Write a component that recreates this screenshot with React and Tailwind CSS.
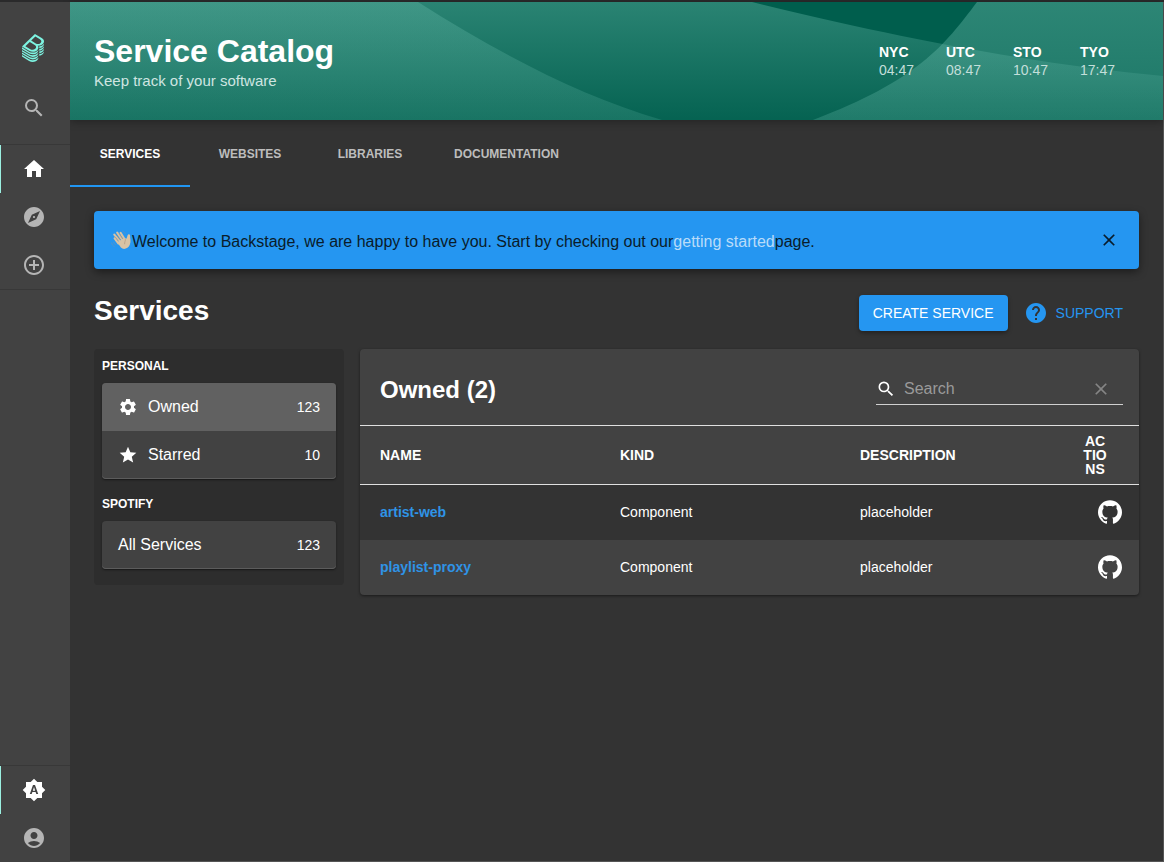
import {
  MdSearch, MdHome, MdExplore, MdControlPoint, MdBrightnessAuto,
  MdAccountCircle, MdHelp, MdClear, MdSettings, MdStar,
} from "react-icons/md";
import { SiGithub } from "react-icons/si";

const LOGO_PATH =
  "M303,166.05a80.69,80.69,0,0,0,13.45-10.37c.79-.77,1.55-1.53,2.3-2.3a83.12,83.12,0,0,0,7.93-9.38A63.69,63.69,0,0,0,333,133.23a48.58,48.58,0,0,0,4.35-16.4c1.49-19.39-10-38.67-35.62-54.22L198.56,0,78.3,115.23,0,190.25l108.6,65.91a111.59,111.59,0,0,0,57.76,16.41c24.92,0,48.8-8.8,66.42-25.69,19.16-18.36,25.52-42.12,13.7-61.87a49.22,49.22,0,0,0-6.8-8.87A89.17,89.17,0,0,0,259,178.29h.15a85.08,85.08,0,0,0,31-5.79A80.88,80.88,0,0,0,303,166.05ZM202.45,225.86c-19.32,18.51-50.4,21.23-75.7,5.9L51.61,186.15l67.45-64.64,76.41,46.38C223,184.58,221.49,207.61,202.45,225.86Zm8.93-82.22-70.65-42.89L205.14,39,274.51,81.1c25.94,15.72,29.31,37,10.55,55A60.69,60.69,0,0,1,211.38,143.64Zm29.86,190c-19.57,18.75-46.17,29.09-74.88,29.09a123.73,123.73,0,0,1-64.1-18.2L0,282.52v24.67L108.6,373.1a111.6,111.6,0,0,0,57.76,16.42c24.92,0,48.8-8.81,66.42-25.69,12.88-12.34,20-27.13,19.68-41.49v-1.79A87.27,87.27,0,0,1,241.24,333.68Zm0-39c-19.57,18.75-46.17,29.08-74.88,29.08a123.81,123.81,0,0,1-64.1-18.19L0,243.53v24.68l108.6,65.91a111.6,111.6,0,0,0,57.76,16.42c24.92,0,48.8-8.81,66.42-25.69,12.88-12.34,20-27.13,19.68-41.5v-1.78A87.27,87.27,0,0,1,241.24,294.7Zm0-39c-19.57,18.76-46.17,29.09-74.88,29.09a123.81,123.81,0,0,1-64.1-18.19L0,204.55v24.68l108.6,65.91a111.59,111.59,0,0,0,57.76,16.41c24.92,0,48.8-8.8,66.42-25.68,12.88-12.35,20-27.13,19.68-41.5v-1.82A86.09,86.09,0,0,1,241.24,255.71Zm83.7,25.74a94.15,94.15,0,0,1-60.2,25.86h0V334a81.6,81.6,0,0,0,51.74-22.37c14-13.38,21.14-28.11,21-42.64v-2.19A94.92,94.92,0,0,1,324.94,281.45Zm-83.7,91.21c-19.57,18.76-46.17,29.09-74.88,29.09a123.73,123.73,0,0,1-64.1-18.2L0,321.5v24.68l108.6,65.9a111.6,111.6,0,0,0,57.76,16.42c24.92,0,48.8-8.8,66.42-25.69,12.88-12.34,20-27.13,19.68-41.49v-1.79A86.29,86.29,0,0,1,241.24,372.66ZM327,162.45c-.68.69-1.35,1.38-2.05,2.06a94.37,94.37,0,0,1-10.64,8.65,91.35,91.35,0,0,1-11.6,7,94.53,94.53,0,0,1-26.24,8.71,97.69,97.69,0,0,1-14.16,1.57c.5,1.61.9,3.25,1.25,4.9a53.27,53.27,0,0,1,1.14,12V217h.05a84.41,84.41,0,0,0,25.35-5.55,81,81,0,0,0,26.39-16.82c.8-.77,1.5-1.56,2.26-2.34a82.08,82.08,0,0,0,7.93-9.38A63.76,63.76,0,0,0,333,172.17a48.55,48.55,0,0,0,4.32-16.45c.09-1.23.2-2.47.19-3.7V150q-1.08,1.54-2.25,3.09A96.73,96.73,0,0,1,327,162.45Zm0,77.92c-.69.7-1.31,1.41-2,2.1a94.2,94.2,0,0,1-60.2,25.86h0l0,26.67h0a81.6,81.6,0,0,0,51.74-22.37A73.51,73.51,0,0,0,333,250.13a48.56,48.56,0,0,0,4.32-16.44c.09-1.24.2-2.47.19-3.71v-2.19c-.74,1.07-1.46,2.15-2.27,3.21A95.68,95.68,0,0,1,327,240.37Zm0-39c-.69.7-1.31,1.41-2,2.1a93.18,93.18,0,0,1-10.63,8.65,91.63,91.63,0,0,1-11.63,7,95.47,95.47,0,0,1-37.94,10.18h0V256h0a81.65,81.65,0,0,0,51.74-22.37c.8-.77,1.5-1.56,2.26-2.34a82.08,82.08,0,0,0,7.93-9.38A63.76,63.76,0,0,0,333,211.15a48.56,48.56,0,0,0,4.32-16.44c.09-1.24.2-2.48.19-3.71v-2.2c-.74,1.08-1.46,2.16-2.27,3.22A95.68,95.68,0,0,1,327,201.39Z";

const focusRing = "focus-visible:outline-2 focus-visible:outline-[#9bf0e1]";

function SideLink({ icon: Icon, label, active }) {
  return (
    <a
      href="#"
      aria-label={label}
      aria-current={active ? "page" : undefined}
      className={`flex h-12 items-center justify-center border-l pr-[3px] ${focusRing} ${
        active ? "border-[#9bf0e1] text-white" : "border-transparent text-[#b5b5b5]"
      }`}
    >
      <Icon className="size-6" />
    </a>
  );
}

function Sidebar() {
  return (
    <nav className="relative z-10 flex w-[70px] shrink-0 flex-col bg-[#424242]">
      <a href="#" aria-label="Backstage" className={`flex justify-center pt-8 pr-1 pb-[34px] ${focusRing}`}>
        <svg viewBox="0 0 337.46 428.5" className="h-7 w-[22px]" fill="#7df3e1">
          <path d={LOGO_PATH} />
        </svg>
      </a>
      <button
        type="button"
        aria-label="Search"
        className={`flex h-12 items-center justify-center pr-[3px] pb-6 text-[#b5b5b5] ${focusRing}`}
      >
        <MdSearch className="size-6" />
      </button>
      <div className="border-y border-[#383838]">
        <SideLink icon={MdHome} label="Home" active />
        <SideLink icon={MdExplore} label="Explore" />
        <SideLink icon={MdControlPoint} label="Create" />
      </div>
      <div className="mt-auto border-t border-[#383838]">
        <SideLink icon={MdBrightnessAuto} label="Theme" active />
        <SideLink icon={MdAccountCircle} label="Account" />
      </div>
    </nav>
  );
}

const clocks = [
  ["NYC", "04:47"],
  ["UTC", "08:47"],
  ["STO", "10:47"],
  ["TYO", "17:47"],
];

function HeaderWaves() {
  return (
    <svg
      viewBox="0 0 1093 118"
      preserveAspectRatio="none"
      className="absolute inset-0 size-full"
      aria-hidden="true"
    >
      <defs>
        <linearGradient id="wave-wide" x1="0" y1="0" x2="0" y2="118" gradientUnits="userSpaceOnUse">
          <stop offset="0" stopColor="#80d0c0" stopOpacity=".33" />
          <stop offset="1" stopColor="#80d0c0" stopOpacity=".04" />
        </linearGradient>
        <linearGradient id="wave-left" x1="0" y1="0" x2="0" y2="118" gradientUnits="userSpaceOnUse">
          <stop offset="0" stopColor="#80d0c0" stopOpacity=".25" />
          <stop offset="1" stopColor="#80d0c0" stopOpacity=".16" />
        </linearGradient>
        <linearGradient id="wave-right" x1="0" y1="0" x2="0" y2="118" gradientUnits="userSpaceOnUse">
          <stop offset="0" stopColor="#80d0c0" stopOpacity=".35" />
          <stop offset="1" stopColor="#80d0c0" stopOpacity=".22" />
        </linearGradient>
      </defs>
      <path fill="url(#wave-wide)" d="M0 0H682C800 29 950 61 1093 74V118H0Z" />
      <path fill="url(#wave-left)" d="M0 0H348C430 52 510 94 592 118H0Z" />
      <path fill="url(#wave-right)" d="M907 0C874 44 848 78 743 118H1093V0Z" />
    </svg>
  );
}

function Header() {
  return (
    <header className="relative bg-[#005e4d] shadow-[0_2px_8px_rgba(0,0,0,.3)]">
      <HeaderWaves />
      <div className="relative flex h-[118px] items-center justify-between pr-[48px] pl-6">
        <div className="pt-1">
          <h1 className="text-[32px] leading-9 font-bold text-white">Service Catalog</h1>
          <p className="text-[15px] leading-6 text-[#cfe5e1]">Keep track of your software</p>
        </div>
        <dl className="flex gap-8">
          {clocks.map(([city, time]) => (
            <div key={city} className="w-[35px]">
              <dt className="text-sm leading-[18px] font-bold text-white">{city}</dt>
              <dd className="text-sm leading-[18px] text-[#c3dfda]">{time}</dd>
            </div>
          ))}
        </dl>
      </div>
    </header>
  );
}

function Tabs() {
  return (
    <div role="tablist" className="flex">
      {["Services", "Websites", "Libraries", "Documentation"].map((name, i) => (
        <button
          key={name}
          type="button"
          role="tab"
          aria-selected={i === 0}
          className={`h-[67px] min-w-[120px] border-b-2 px-6 pt-[2px] text-xs font-bold uppercase ${focusRing} ${
            i === 0 ? "border-[#2196f3] text-white" : "border-transparent text-[#bdbdbd]"
          }`}
        >
          {name}
        </button>
      ))}
    </div>
  );
}

function WavingHand() {
  return (
    <svg viewBox="0 0 22 22" className="h-[22px] w-[22px] shrink-0" fill="none" role="img" aria-label="Waving hand">
      <path
        d="M8.5 14.5 4.6 9.4M10.3 12.6 4.3 5.6M12.4 11.2 7.2 3.6M14.6 10.2 10.6 3.8"
        stroke="#d9c3a5"
        strokeWidth="2.1"
        strokeLinecap="round"
      />
      <path
        d="M7.2 13.2 14.9 9.1C16.8 10.8 16.9 8.2 17.6 6.2 18.2 4.6 20.3 5.2 20.1 7 19.9 9.3 21.3 12.2 19.8 15.8 18.3 19.6 13.6 21.4 10.9 18.6Z"
        fill="#d9c3a5"
      />
      <path
        d="M8 11.6 5.4 8.2M10 10.6 6.6 6.4M12.4 9.6 9.2 4.8M15.4 10.6C15.6 12 14.4 13 14.6 14.8"
        stroke="#a58f78"
        strokeWidth=".6"
        strokeLinecap="round"
      />
      <path
        d="M12.6 2.2C14 2.6 15 3.6 15.4 4.8M1.6 14C1.9 15.6 2.9 16.8 4.2 17.4M3.6 13.4C3.9 14.4 4.6 15.1 5.4 15.5"
        stroke="#5f93c0"
        strokeWidth=".8"
        strokeLinecap="round"
      />
    </svg>
  );
}

function WelcomeBanner() {
  return (
    <div className="flex min-h-[58px] items-center rounded bg-[#2596f1] pr-3 pl-4 text-base text-[#0a1c2b] shadow-[0_3px_8px_rgba(0,0,0,.45)]">
      <WavingHand />
      <p className="grow pt-1">
        Welcome to Backstage, we are happy to have you. Start by checking out our
        <a href="#" className="text-[#b9dcf9]">getting started</a>page.
      </p>
      <button type="button" aria-label="Dismiss" className={`p-2 ${focusRing}`}>
        <MdClear className="size-5" />
      </button>
    </div>
  );
}

function FilterGroup({ title, items }) {
  return (
    <section>
      <h3 className="py-[9px] text-xs leading-4 font-bold text-white uppercase">{title}</h3>
      <ul className="mb-2 overflow-hidden rounded bg-[#424242] shadow-[0_1px_2px_rgba(0,0,0,.5),inset_0_-1px_0_#5c5c5c]">
        {items.map(({ icon: Icon, label, count, selected }) => (
          <li key={label}>
            <button
              type="button"
              aria-pressed={Boolean(selected)}
              className={`flex h-12 w-full items-center px-4 text-white ${focusRing} ${selected ? "bg-[#616161]" : ""}`}
            >
              {Icon && <Icon className="mr-[10px] size-5" />}
              <span className="text-base">{label}</span>
              <span className="ml-auto text-sm">{count}</span>
            </button>
          </li>
        ))}
      </ul>
    </section>
  );
}

function Filters() {
  return (
    <aside className="flex w-[250px] shrink-0 flex-col self-start rounded bg-[#2d2d2d] px-2 pb-2">
      <FilterGroup
        title="Personal"
        items={[
          { icon: MdSettings, label: "Owned", count: 123, selected: true },
          { icon: MdStar, label: "Starred", count: 10 },
        ]}
      />
      <FilterGroup title="Spotify" items={[{ label: "All Services", count: 123 }]} />
    </aside>
  );
}

const services = ["artist-web", "playlist-proxy"];

function ServiceTable() {
  return (
    <section className="min-w-0 grow self-start overflow-hidden rounded bg-[#424242] shadow-[0_1px_3px_rgba(0,0,0,.5)]">
      <div className="flex h-[76px] items-center justify-between pr-4 pl-5">
        <h3 className="pt-[6px] text-2xl font-bold text-white">Owned (2)</h3>
        <div className="mt-1 flex h-8 w-[247px] items-center border-b border-[#d0d0d0]">
          <MdSearch className="size-5 shrink-0 text-white" />
          <input
            type="text"
            aria-label="Search services"
            placeholder="Search"
            className="ml-2 min-w-0 grow bg-transparent text-base text-white outline-none placeholder:text-[#9a9a9a]"
          />
          <button type="button" aria-label="Clear search" className={`px-3 text-[#858585] ${focusRing}`}>
            <MdClear className="size-5" />
          </button>
        </div>
      </div>
      <table className="w-full table-fixed text-left text-sm text-white">
        <thead>
          <tr className="h-[59px] border-y border-[#e0e0e0] font-bold uppercase">
            <th className="px-5">Name</th>
            <th className="px-5">Kind</th>
            <th className="px-5">Description</th>
            <th className="w-[59px] p-0">
              <span className="ml-px block w-7 text-center leading-[14px] break-all">Actions</span>
            </th>
          </tr>
        </thead>
        <tbody>
          {services.map((name) => (
            <tr key={name} className="h-[55px] odd:bg-[#333333]">
              <td className="px-5">
                <a href="#" className="font-bold text-[#2f93e6]">{name}</a>
              </td>
              <td className="px-5">Component</td>
              <td className="px-5">placeholder</td>
              <td className="p-0 pr-[17px]">
                <a href="#" aria-label={`${name} on GitHub`} className="flex justify-end">
                  <SiGithub className="size-6" />
                </a>
              </td>
            </tr>
          ))}
        </tbody>
      </table>
    </section>
  );
}

export default function App() {
  return (
    <div className="flex min-h-screen border-t-2 border-[#2a2a2b] bg-[#333333] font-['Liberation_Sans',Arial,sans-serif]">
      <Sidebar />
      <div className="min-w-0 grow border-r border-b border-[#555555]">
        <Header />
        <Tabs />
        <main className="p-6">
          <WelcomeBanner />
          <div className="mt-[26px] mb-[18px] flex h-9 items-center">
            <h2 className="grow pb-1 text-[28px] font-bold text-white">Services</h2>
            <button
              type="button"
              className={`h-9 rounded bg-[#2596f1] px-[14px] text-sm text-white shadow-[0_2px_4px_rgba(0,0,0,.35)] ${focusRing}`}
            >
              CREATE SERVICE
            </button>
            <button
              type="button"
              className={`ml-2 flex h-9 items-center gap-2 pr-4 pl-2 text-sm text-[#2596f1] ${focusRing}`}
            >
              <MdHelp className="size-6" />
              SUPPORT
            </button>
          </div>
          <div className="flex gap-4">
            <Filters />
            <ServiceTable />
          </div>
        </main>
      </div>
    </div>
  );
}
